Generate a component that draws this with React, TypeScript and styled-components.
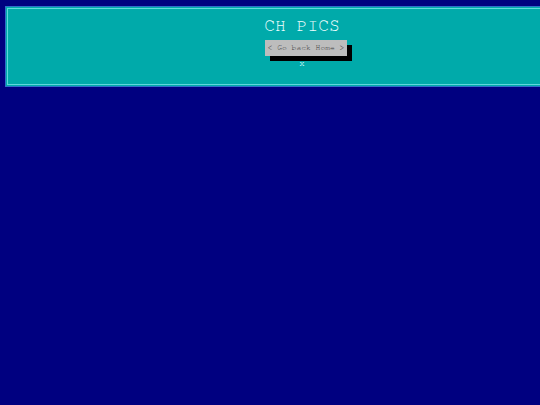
import React from "react";
import styled, { createGlobalStyle } from "styled-components";

const mono = `"Nimbus Mono PS", "FreeMono", "Courier New", Courier, "Liberation Mono", monospace`;

const Global = createGlobalStyle`
  html, body {
    margin: 0;
    padding: 0;
    background: #000080;
    overflow: hidden;
  }
  body {
    font-family: ${mono};
  }
`;

const Page = styled.div`
  width: 540px;
  height: 405px;
  background: #000080;
  padding: 6px 0 0 5px;
  box-sizing: border-box;
`;

const Header = styled.header`
  width: 594px;
  height: 81px;
  box-sizing: border-box;
  background: #00aaaa;
  border: 3px double #5fd7dd;
  outline: 1px solid #2f6fc8;
  outline-offset: -1px;
  display: flex;
  flex-direction: column;
  align-items: center;
  padding-top: 7px;
`;

const Title = styled.h1`
  margin: 0;
  font-family: ${mono};
  font-weight: normal;
  font-size: 18px;
  line-height: 20px;
  color: #f0ffff;
`;

const HomeButton = styled.button`
  margin: 4px 0 0 8px;
  font-family: ${mono};
  font-size: 8px;
  line-height: 10px;
  padding: 3px 3px;
  border: none;
  background: #bdbdbd;
  color: #3a3a3a;
  box-shadow: 5px 5px 0 #000000;
  cursor: pointer;
`;

const Close = styled.span`
  margin-top: 3px;
  font-family: ${mono};
  font-size: 9px;
  line-height: 9px;
  color: #d8ffff;
`;

export default function App() {
  return (
    <>
      <Global />
      <Page>
        <Header>
          <Title>CH PICS</Title>
          <HomeButton>&lt; Go back Home &gt;</HomeButton>
          <Close>x</Close>
        </Header>
      </Page>
    </>
  );
}
